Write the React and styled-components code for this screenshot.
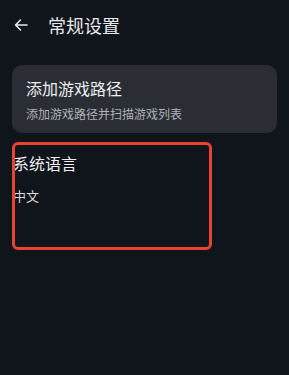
import React from "react";
import styled, { createGlobalStyle } from "styled-components";

const Global = createGlobalStyle`
  html, body {
    margin: 0;
    padding: 0;
    background: #10141b;
  }
  body {
    font-family: "Noto Sans CJK SC", "Noto Sans", sans-serif;
    color: #e8e9eb;
  }
`;

const Page = styled.div`
  width: 289px;
  height: 375px;
  background: #10141b;
  overflow: hidden;
`;

const Header = styled.div`
  display: flex;
  align-items: center;
  height: 50px;
  padding-left: 13px;
  gap: 19px;
`;

const BackButton = styled.div`
  display: flex;
  align-items: center;
  width: 16px;
  height: 16px;
`;

const Title = styled.div`
  font-size: 18px;
  line-height: 1;
  color: #e8e9eb;
`;

const Card = styled.div`
  margin: 15px 12px 0 12px;
  height: 68px;
  box-sizing: border-box;
  padding: 13px 14px 0 14px;
  background: #2a2e34;
  border-radius: 10px;
`;

const CardTitle = styled.div`
  font-size: 16px;
  line-height: 20px;
  color: #eceef0;
`;

const CardSub = styled.div`
  margin-top: 9px;
  font-size: 12px;
  line-height: 14px;
  color: #aeb2b8;
`;

const Item = styled.div`
  position: relative;
  margin-top: 9px;
  height: 108px;
  padding: 12px 0 0 13px;
  box-sizing: border-box;
`;

const ItemTitle = styled.div`
  font-size: 16px;
  line-height: 19px;
  color: #eceef0;
`;

const ItemValue = styled.div`
  margin-top: 15px;
  font-size: 13px;
  line-height: 16px;
  color: #d8dadd;
`;

const Highlight = styled.div`
  position: absolute;
  left: 12px;
  top: 0;
  width: 200px;
  height: 108px;
  box-sizing: border-box;
  border: 3px solid #e8432e;
  border-radius: 6px;
  pointer-events: none;
`;

export default function App() {
  return (
    <Page>
      <Global />
      <Header>
        <BackButton>
          <svg width="16" height="16" viewBox="0 0 16 16" fill="none">
            <path
              d="M14 8H2.5M7.5 3L2.5 8l5 5"
              stroke="#e8e9eb"
              strokeWidth="1.5"
              strokeLinecap="round"
              strokeLinejoin="round"
            />
          </svg>
        </BackButton>
        <Title>常规设置</Title>
      </Header>
      <Card>
        <CardTitle>添加游戏路径</CardTitle>
        <CardSub>添加游戏路径并扫描游戏列表</CardSub>
      </Card>
      <Item>
        <ItemTitle>系统语言</ItemTitle>
        <ItemValue>中文</ItemValue>
        <Highlight />
      </Item>
    </Page>
  );
}
